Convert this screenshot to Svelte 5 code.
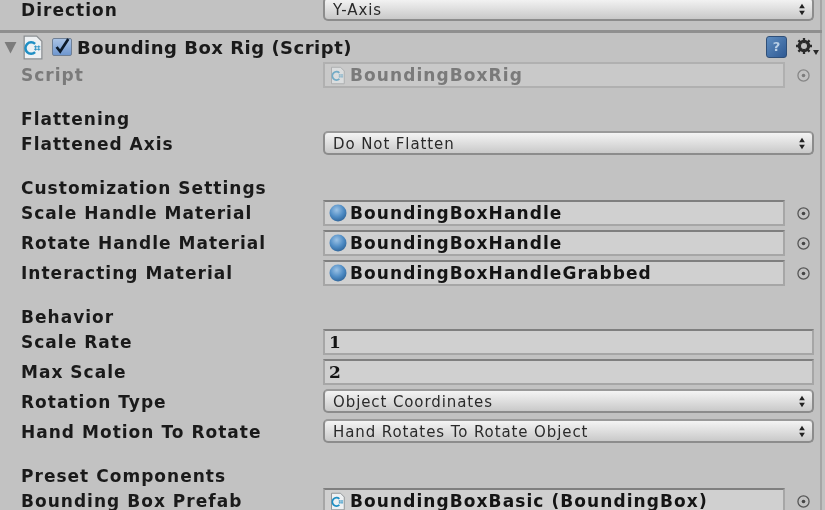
<script>
	const handleRows = [
		{ label: 'Scale Handle Material', value: 'BoundingBoxHandle' },
		{ label: 'Rotate Handle Material', value: 'BoundingBoxHandle' },
		{ label: 'Interacting Material', value: 'BoundingBoxHandleGrabbed' }
	];
</script>

{#snippet arrows()}
	<svg class="arrows" width="8" height="13" viewBox="0 0 7 11">
		<path d="M3.5 0.5 L6 4.5 H1 Z M3.5 10.5 L6 6.5 H1 Z" fill="#222" />
	</svg>
{/snippet}

{#snippet picker()}
	<svg class="picker" width="15" height="15" viewBox="0 0 14 14">
		<circle cx="7" cy="7" r="5.2" fill="none" stroke="#555" stroke-width="1.2" />
		<circle cx="7" cy="7" r="1.7" fill="#444" />
	</svg>
{/snippet}

{#snippet scriptIcon(size)}
	<svg class="file" width={size} height={size + 4} viewBox="0 0 20 24">
		<path d="M2 1 H14 L19 6 V23 H2 Z" fill="#eef1f3" stroke="#8b8f92" stroke-width="1.2" />
		<path d="M12.5 8.5 A5.5 5.5 0 1 0 12.5 16.5" fill="none" stroke="#1f8fc4" stroke-width="2.4" />
		<path d="M13 10 V15 M16 10 V15 M11.5 11.3 H17.5 M11.5 13.7 H17.5" stroke="#2c93c4" stroke-width="0.9" />
	</svg>
{/snippet}

{#snippet sphere()}
	<svg class="sphere" width="18" height="18" viewBox="0 0 18 18">
		<defs>
			<radialGradient id="ball" cx="0.42" cy="0.32" r="0.75">
				<stop offset="0" stop-color="#9cc3e6" />
				<stop offset="0.55" stop-color="#4f8cc4" />
				<stop offset="1" stop-color="#2a5f94" />
			</radialGradient>
		</defs>
		<circle cx="9" cy="9" r="8.5" fill="url(#ball)" />
	</svg>
{/snippet}

<div class="inspector">
	<div class="row">
		<span class="label">Direction</span>
		<div class="select"><span>Y-Axis</span> {@render arrows()}</div>
	</div>

	<div class="component-header">
		<svg class="fold" width="13" height="13" viewBox="0 0 12 12">
			<path d="M0.5 1 H11.5 L6 11.5 Z" fill="#7c7c7c" />
		</svg>
		{@render scriptIcon(21)}
		<span class="check">
			<svg width="20" height="20" viewBox="0 0 20 20">
				<path d="M4 10 L8 15 L17 1" fill="none" stroke="#0c1a2a" stroke-width="3" />
			</svg>
		</span>
		<span class="title">Bounding Box Rig (Script)</span>
		<span class="help">?</span>
		<span class="gear">
			<svg width="24" height="20" viewBox="0 0 24 20">
				<circle cx="9" cy="9" r="4.8" fill="none" stroke="#2a2a2a" stroke-width="2.8" />
				<path d="M9 1 V17 M1 9 H17 M3.4 3.4 L14.6 14.6 M14.6 3.4 L3.4 14.6" stroke="#2a2a2a" stroke-width="2.3" />
				<circle cx="9" cy="9" r="3" fill="#c2c2c2" />
				<path d="M18 13 H24 L21 18 Z" fill="#2a2a2a" />
			</svg>
		</span>
	</div>

	<div class="row dim">
		<span class="label">Script</span>
		<div class="with-picker">
			<div class="field disabled">{@render scriptIcon(15)}<span>BoundingBoxRig</span></div>
			{@render picker()}
		</div>
	</div>

	<div class="group">
		<div class="heading">Flattening</div>
		<div class="row">
			<span class="label">Flattened Axis</span>
			<div class="select"><span>Do Not Flatten</span> {@render arrows()}</div>
		</div>
	</div>

	<div class="group">
		<div class="heading">Customization Settings</div>
		{#each handleRows as item}
			<div class="row">
				<span class="label">{item.label}</span>
				<div class="with-picker">
					<div class="field">{@render sphere()}<span>{item.value}</span></div>
					{@render picker()}
				</div>
			</div>
		{/each}
	</div>

	<div class="group">
		<div class="heading">Behavior</div>
		<div class="row">
			<span class="label">Scale Rate</span>
			<div class="field number">1</div>
		</div>
		<div class="row">
			<span class="label">Max Scale</span>
			<div class="field number">2</div>
		</div>
		<div class="row">
			<span class="label">Rotation Type</span>
			<div class="select"><span>Object Coordinates</span> {@render arrows()}</div>
		</div>
		<div class="row">
			<span class="label">Hand Motion To Rotate</span>
			<div class="select"><span>Hand Rotates To Rotate Object</span> {@render arrows()}</div>
		</div>
	</div>

	<div class="group">
		<div class="heading">Preset Components</div>
		<div class="row">
			<span class="label">Bounding Box Prefab</span>
			<div class="with-picker">
				<div class="field">{@render scriptIcon(15)}<span>BoundingBoxBasic (BoundingBox)</span></div>
				{@render picker()}
			</div>
		</div>
	</div>
</div>

<style>
	:global(body) {
		background: #c2c2c2;
		overflow: hidden;
	}

	.inspector {
		box-sizing: border-box;
		width: 825px;
		height: 510px;
		overflow: hidden;
		background: #c2c2c2;
		border-right: 3px solid #c2c2c2;
		box-shadow: inset -2px 0 0 #a6a6a6;
		font-family: 'DejaVu Sans', sans-serif;
		color: #1a1a1a;
		filter: blur(0.7px);
	}

	.inspector > :first-child {
		margin-top: -5px;
	}

	.row {
		display: grid;
		grid-template-columns: 302px 1fr;
		align-items: center;
		height: 30px;
		padding: 0 8px 0 21px;
	}

	.label,
	.heading {
		font-size: 17px;
		font-weight: 700;
		letter-spacing: 1.02px;
		white-space: nowrap;
	}

	.heading {
		height: 23px;
		line-height: 26px;
		padding-left: 21px;
	}

	.group {
		margin-top: 16px;
	}

	.dim .label {
		color: #7a7a7a;
	}

	.select {
		box-sizing: border-box;
		display: flex;
		align-items: center;
		justify-content: space-between;
		height: 24px;
		margin-bottom: 2px;
		padding: 0 6px 0 8px;
		border: 2px solid #8c8c8c;
		border-top-color: #9a9a9a;
		border-radius: 5px;
		background: linear-gradient(#f4f4f4, #c9c9c9);
		font-size: 15px;
		letter-spacing: 0.9px;
		color: #2a2a2a;
		white-space: nowrap;
	}

	.select span {
		padding-top: 1px;
	}

	.with-picker {
		display: flex;
		align-items: center;
		gap: 11px;
	}

	.field {
		box-sizing: border-box;
		display: flex;
		align-items: center;
		flex: 1;
		gap: 3px;
		height: 26px;
		padding-left: 4px;
		border: 2px solid #a6a6a6;
		border-top-color: #7f7f7f;
		background: #d0d0d0;
		font-size: 17px;
		font-weight: 700;
		letter-spacing: 1.08px;
		color: #141414;
		white-space: nowrap;
	}

	.field.number {
		padding-left: 4px;
		font-family: 'DejaVu Serif', serif;
	}

	.field.disabled {
		border-color: #b0b0b0;
		background: #c9c9c9;
		color: #7a7a7a;
	}

	.field.disabled .file {
		opacity: 0.5;
	}

	.dim .picker {
		opacity: 0.55;
	}

	.picker {
		flex: none;
		margin-right: 3px;
	}

	.sphere {
		flex: none;
	}

	.file {
		flex: none;
	}

	.field .file {
		margin: 0 2px 0 1px;
	}

	.component-header {
		display: flex;
		align-items: center;
		height: 26px;
		margin-top: 5px;
		padding: 1px 3px 0 4px;
		border-top: 3px solid #8f8f8f;
	}

	.fold {
		margin-right: 5px;
	}

	.check {
		display: flex;
		align-items: center;
		justify-content: center;
		box-sizing: border-box;
		width: 20px;
		height: 18px;
		margin: 0 5px 0 9px;
		border: 1px solid #6f7f94;
		border-radius: 2px;
		background: linear-gradient(#a9c3e6, #6f97cf);
	}

	.title {
		flex: 1;
		font-size: 18px;
		font-weight: 700;
		letter-spacing: 0.5px;
		white-space: nowrap;
	}

	.help {
		box-sizing: border-box;
		width: 21px;
		height: 22px;
		margin-right: 8px;
		border: 1px solid #2f4f78;
		border-radius: 3px;
		background: linear-gradient(135deg, #5f8dc0, #2f5a94);
		font-size: 13px;
		font-weight: 700;
		line-height: 20px;
		text-align: center;
		color: #b9cfe6;
	}

	.gear {
		display: flex;
		width: 24px;
	}
</style>
